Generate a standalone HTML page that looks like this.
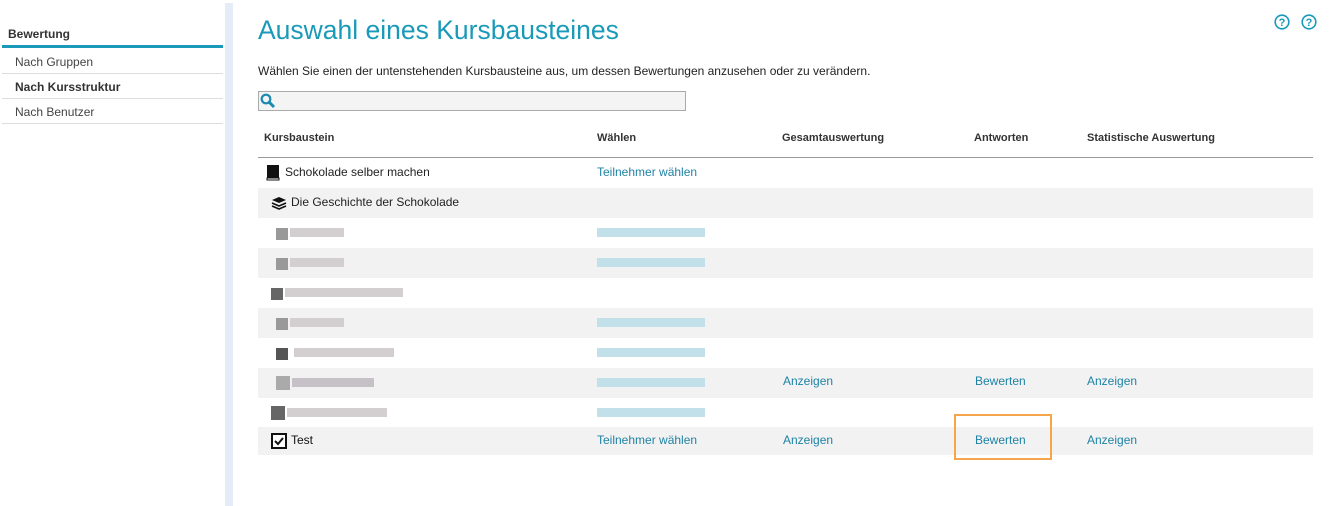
<!DOCTYPE html>
<html><head><meta charset="utf-8"><style>
body{margin:0;width:1331px;height:506px;background:#fff;font-family:"Liberation Sans",Arial,sans-serif;font-size:12px;color:#222;position:relative;overflow:hidden}
.a{position:absolute}
.side div{position:absolute;left:2px;width:221px;border-bottom:1px solid #ddd;height:24px;line-height:24px;padding-left:13px;box-sizing:border-box;color:#444}
.row{position:absolute;left:258px;width:1055px;height:30px}
.g{background:#f2f2f2}
.t{position:absolute;top:0;line-height:30px;white-space:nowrap}
.l{color:#1f83a5}
.blur{position:absolute;height:9px}
</style></head><body>
<div class="a" style="left:225px;top:3px;width:8px;height:503px;background:#e3ecf7"></div>
<div class="a" style="left:8px;top:27px;font-weight:bold;color:#333">Bewertung</div>
<div class="a" style="left:2px;top:45px;width:221px;height:3px;background:#1a9ab8"></div>
<div class="side">
<div style="top:50px">Nach Gruppen</div>
<div style="top:75px;font-weight:bold;color:#333">Nach Kursstruktur</div>
<div style="top:100px">Nach Benutzer</div>
</div>
<div class="a" style="left:258px;top:15px;font-size:26.5px;color:#1a9ab8">Auswahl eines Kursbausteines</div>
<div class="a" style="left:258px;top:64px;color:#222">Wählen Sie einen der untenstehenden Kursbausteine aus, um dessen Bewertungen anzusehen oder zu verändern.</div>
<div class="a" style="left:258px;top:91px;width:426px;height:18px;border:1px solid #aaa;background:#f4f4f4"></div>
<svg class="a" style="left:260px;top:93px" width="16" height="16" viewBox="0 0 16 16"><circle cx="6" cy="6" r="4.3" fill="none" stroke="#1a8ab0" stroke-width="2.2"/><path d="M9 9l5 5" stroke="#1a8ab0" stroke-width="3"/></svg>
<svg class="a" style="left:1274px;top:14px" width="16" height="16"><circle cx="8" cy="8" r="6.8" fill="none" stroke="#1a9ab8" stroke-width="1.6"/><text x="8" y="12" text-anchor="middle" font-size="11" font-weight="bold" fill="#1a9ab8" font-family="Liberation Sans">?</text></svg>
<svg class="a" style="left:1301px;top:14px" width="16" height="16"><circle cx="8" cy="8" r="6.8" fill="none" stroke="#1a9ab8" stroke-width="1.6"/><text x="8" y="12" text-anchor="middle" font-size="11" font-weight="bold" fill="#1a9ab8" font-family="Liberation Sans">?</text></svg>
<div class="a" style="top:132px;left:264px;font-weight:bold;font-size:11px;color:#333">Kursbaustein</div>
<div class="a" style="top:132px;left:597px;font-weight:bold;font-size:11px;color:#333">Wählen</div>
<div class="a" style="top:132px;left:782px;font-weight:bold;font-size:11px;color:#333">Gesamtauswertung</div>
<div class="a" style="top:132px;left:974px;font-weight:bold;font-size:11px;color:#333">Antworten</div>
<div class="a" style="top:132px;left:1087px;font-weight:bold;font-size:11px;color:#333">Statistische Auswertung</div>
<div class="a" style="left:258px;top:157px;width:1055px;height:1px;background:#999"></div>

<div class="row" style="top:158px"><svg class="a" style="left:8px;top:7px" width="14" height="16"><rect x="1" y="0" width="12" height="13" fill="#111"/><rect x="1" y="13" width="12" height="2" fill="none" stroke="#111"/></svg><span class="t" style="left:27px;top:-1px">Schokolade selber machen</span><span class="t l" style="left:339px;top:-1px">Teilnehmer wählen</span></div>
<div class="row g" style="top:188px"><svg class="a" style="left:13px;top:8px" width="16" height="14"><path d="M8 1L1 4l7 3 7-3z" fill="#111"/><path d="M1 7l7 3 7-3M1 10l7 3 7-3" fill="none" stroke="#111" stroke-width="1.6"/></svg><span class="t" style="left:33px;top:-1px">Die Geschichte der Schokolade</span></div>

<div class="row" style="top:218px"><div class="blur" style="left:18px;top:10px;width:12px;height:12px;background:#999"></div><div class="blur" style="left:32px;top:10px;width:54px;background:#d3ced0"></div><div class="blur" style="left:339px;top:10px;width:108px;background:#c2e0e9"></div></div>
<div class="row g" style="top:248px"><div class="blur" style="left:18px;top:10px;width:12px;height:12px;background:#999"></div><div class="blur" style="left:32px;top:10px;width:54px;background:#d3ced0"></div><div class="blur" style="left:339px;top:10px;width:108px;background:#c2e0e9"></div></div>
<div class="row" style="top:278px"><div class="blur" style="left:13px;top:10px;width:12px;height:12px;background:#666"></div><div class="blur" style="left:27px;top:10px;width:118px;background:#d3ced0"></div></div>
<div class="row g" style="top:308px"><div class="blur" style="left:18px;top:10px;width:12px;height:12px;background:#999"></div><div class="blur" style="left:32px;top:10px;width:54px;background:#d3ced0"></div><div class="blur" style="left:339px;top:10px;width:108px;background:#c2e0e9"></div></div>
<div class="row" style="top:338px"><div class="blur" style="left:18px;top:10px;width:12px;height:12px;background:#555"></div><div class="blur" style="left:36px;top:10px;width:100px;background:#d3ced0"></div><div class="blur" style="left:339px;top:10px;width:108px;background:#c2e0e9"></div></div>
<div class="row g" style="top:368px"><div class="blur" style="left:18px;top:8px;width:14px;height:14px;background:#aaa"></div><div class="blur" style="left:34px;top:10px;width:82px;background:#c6c1c6"></div><div class="blur" style="left:339px;top:10px;width:108px;background:#c2e0e9"></div><span class="t l" style="left:525px;top:-2px">Anzeigen</span><span class="t l" style="left:717px;top:-2px">Bewerten</span><span class="t l" style="left:829px;top:-2px">Anzeigen</span></div>
<div class="row" style="top:398px"><div class="blur" style="left:13px;top:8px;width:14px;height:14px;background:#666"></div><div class="blur" style="left:29px;top:10px;width:100px;background:#d3ced0"></div><div class="blur" style="left:339px;top:10px;width:108px;background:#c2e0e9"></div></div>
<div class="row g" style="top:427px;height:28px"><svg class="a" style="left:13px;top:6px" width="16" height="16"><rect x="1" y="1" width="14" height="14" fill="#fff" stroke="#111" stroke-width="2"/><path d="M4 8l3 3 5-6" fill="none" stroke="#111" stroke-width="2"/></svg><span class="t" style="left:33px;top:-2px;color:#111">Test</span><span class="t l" style="left:339px;top:-2px">Teilnehmer wählen</span><span class="t l" style="left:525px;top:-2px">Anzeigen</span><span class="t l" style="left:717px;top:-2px">Bewerten</span><span class="t l" style="left:829px;top:-2px">Anzeigen</span></div>
<div class="a" style="left:954px;top:414px;width:94px;height:42px;border:2px solid #f5a64c"></div>
</body></html>
